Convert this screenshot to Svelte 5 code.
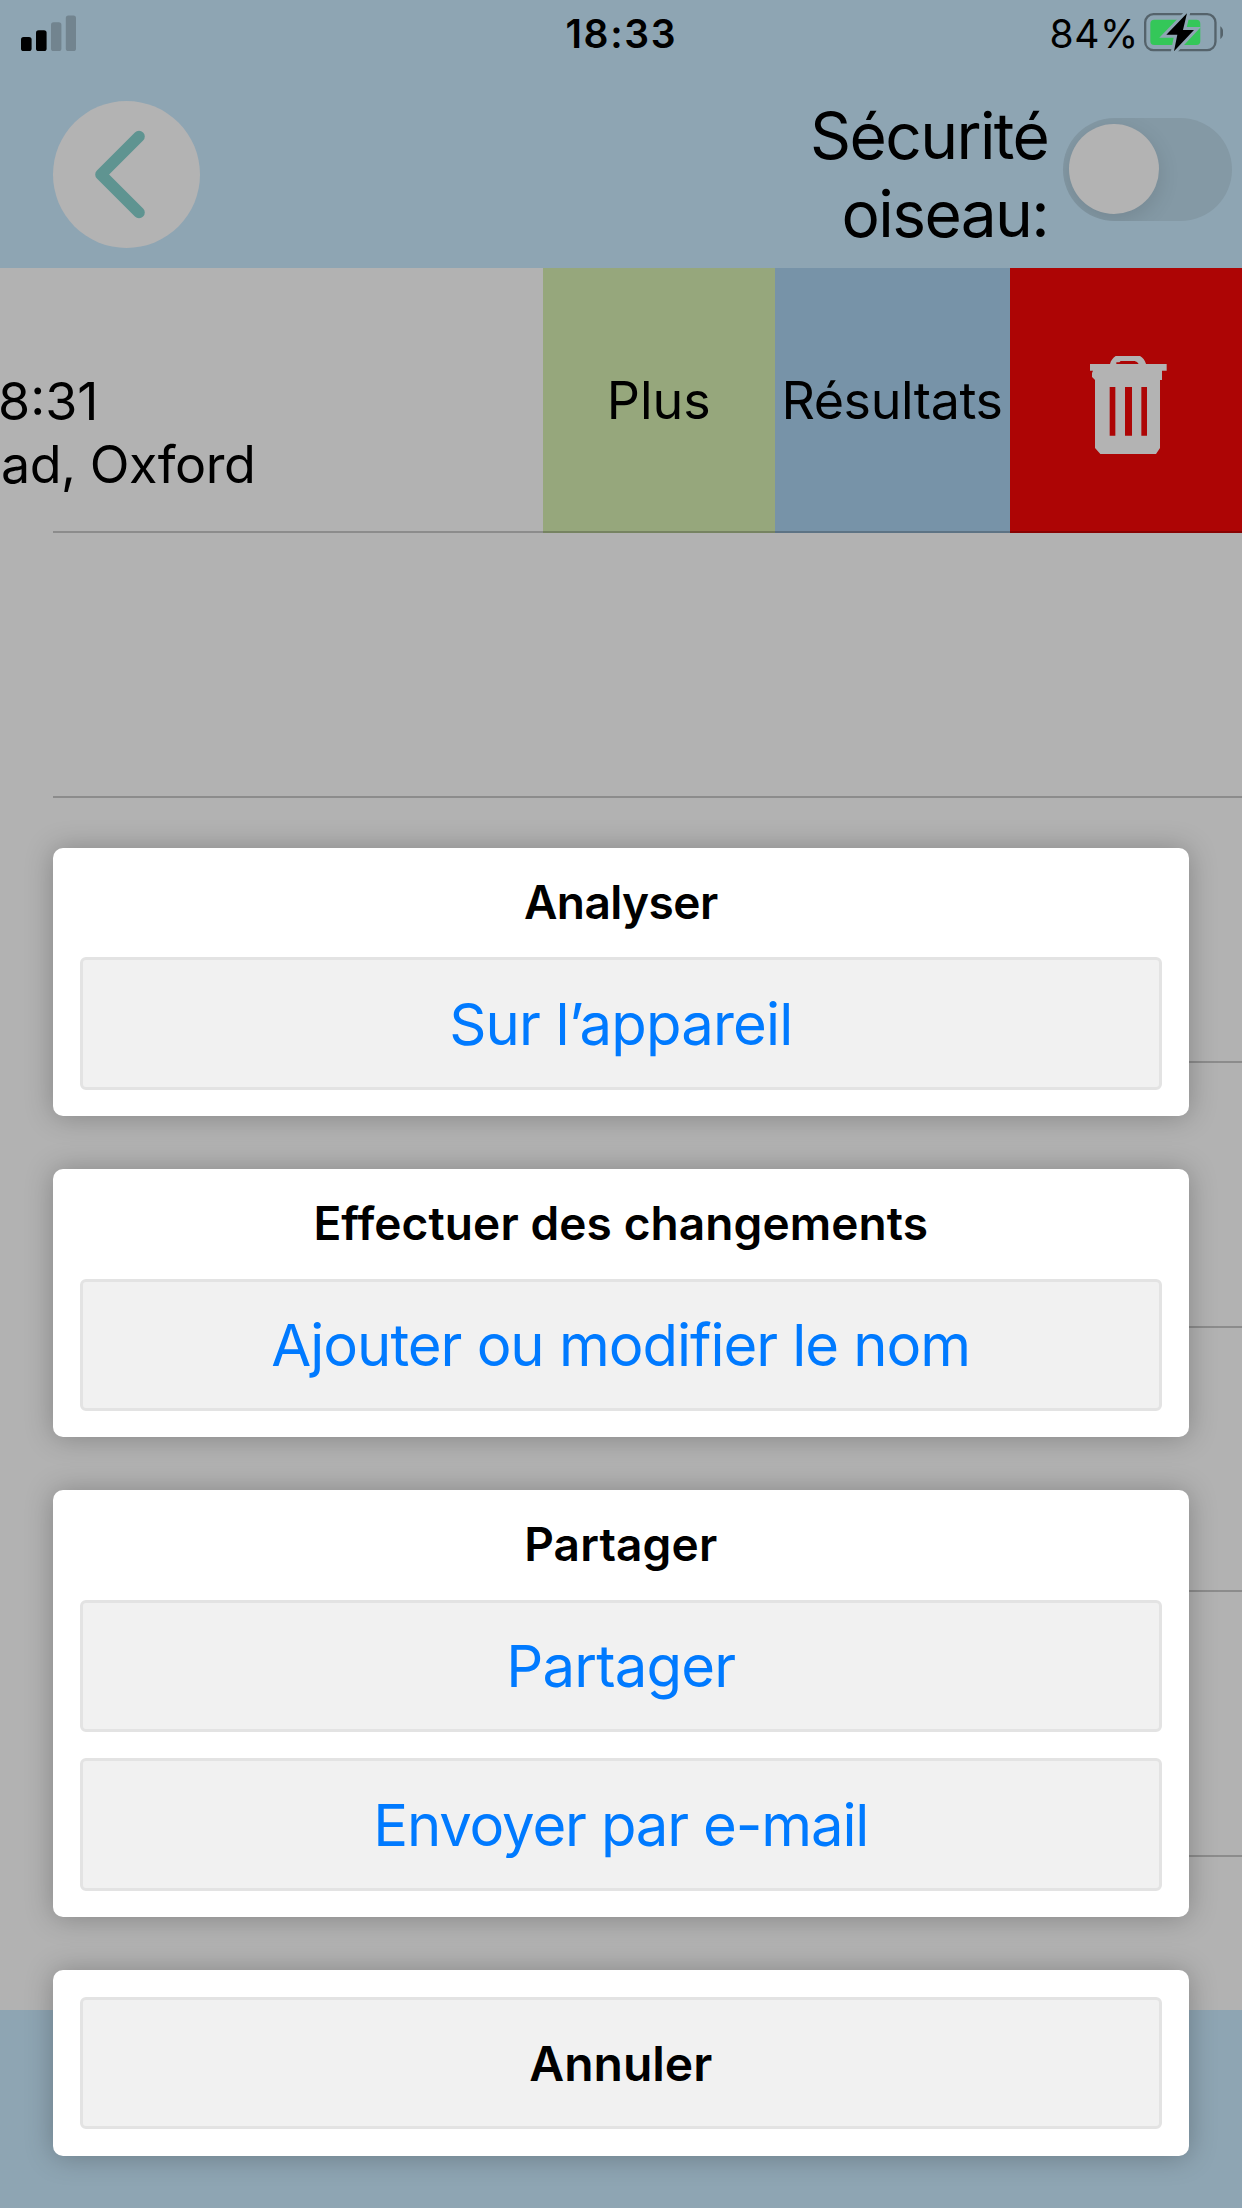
<script lang="ts">
  interface Label {
    text: string;
    tracking: number;
  }

  interface Group {
    title: Label;
    actions: Label[];
  }

  const groups: Group[] = [
    {
      title: { text: 'Analyser', tracking: -0.57 },
      actions: [{ text: 'Sur l’appareil', tracking: -0.85 }],
    },
    {
      title: { text: 'Effectuer des changements', tracking: 0.1 },
      actions: [{ text: 'Ajouter ou modifier le nom', tracking: -1.03 }],
    },
    {
      title: { text: 'Partager', tracking: 0.15 },
      actions: [
        { text: 'Partager', tracking: -0.8 },
        { text: 'Envoyer par e-mail', tracking: -1.15 },
      ],
    },
  ];

  const emptyRows = [1, 2, 3, 4, 5];

  let birdSafety = $state(false);
  let sheetOpen = $state(true);
</script>

<div class="screen">
  <div class="status-bar">
    <svg class="signal" width="55" height="36" viewBox="0 0 55 36">
      <rect x="0" y="22" width="10.6" height="14" rx="2.6" />
      <rect x="15" y="15.2" width="10.6" height="20.8" rx="2.6" />
      <rect class="off" x="30" y="7.2" width="10.4" height="28.8" rx="2.6" />
      <rect class="off" x="44.8" y="0.5" width="10.2" height="35.5" rx="2.6" />
    </svg>
    <span class="time">18:33</span>
    <div class="power">
      <span class="percent">84%</span>
      <svg width="79.3" height="38.4" viewBox="1092 39 238 115">
        <rect class="shell" x="1095.5" y="42.5" width="211" height="108" rx="25" />
        <path class="nub" d="M1321 79c12 7 12 31 0 38z" />
        <rect class="charge" x="1111" y="59" width="150" height="76" rx="12" />
        <path class="bolt halo" d="M1221 40 1159 104h33l-10 50 60-64h-33z" />
        <path class="bolt" d="M1221 40 1159 104h33l-10 50 60-64h-33z" />
      </svg>
    </div>
  </div>

  <header>
    <button class="back" aria-label="Retour">
      <svg width="147" height="147" viewBox="0 0 147 147">
        <path d="M86 35.5 48 73.5l38 38" />
      </svg>
    </button>
    <div class="safety">
      <span class="safety-label">Sécurité<br />oiseau:</span>
      <button
        class="switch"
        class:on={birdSafety}
        role="switch"
        aria-checked={birdSafety}
        aria-label="Sécurité oiseau"
        onclick={() => (birdSafety = !birdSafety)}
      >
        <span class="knob"></span>
      </button>
    </div>
  </header>

  <main>
    <div class="row swiped">
      <div class="recording">
        <span class="clock">8:31</span>
        <span class="place">ad, Oxford</span>
      </div>
      <button class="swipe more" onclick={() => (sheetOpen = true)}>Plus</button>
      <button class="swipe results">Résultats</button>
      <button class="swipe delete" aria-label="Supprimer">
        <svg width="76.7" height="98" viewBox="992 288 230 294">
          <path
            fill-rule="evenodd"
            d="M992 312h60c2-10 9-18 17-24h73c9 5 15 13 18 24h62v20h-14v28h-6v204l-12 18h-167l-16-18V360l-9-9v-12l3-7h-9zM1071 312h67l-5-6-7-3h-42l-4 4h-9zM1051 381v146h17V381zM1097 381v146h21V381zM1146 381v146h17V381z"
          />
        </svg>
      </button>
    </div>
    {#each emptyRows as row (row)}
      <div class="row"></div>
    {/each}
  </main>

  <footer></footer>

  {#if sheetOpen}
    <div class="sheet">
      {#each groups as group}
        <section class="card">
          <h2 style="letter-spacing:{group.title.tracking}px">{group.title.text}</h2>
          {#each group.actions as action}
            <button class="action" style="letter-spacing:{action.tracking}px">{action.text}</button>
          {/each}
        </section>
      {/each}
      <section class="card dismiss">
        <button class="action cancel" onclick={() => (sheetOpen = false)}>Annuler</button>
      </section>
    </div>
  {/if}
</div>

<style>
  :global(body) {
    margin: 0;
  }

  .screen {
    position: relative;
    display: flex;
    flex-direction: column;
    width: 1242px;
    height: 2208px;
    overflow: hidden;
    background: #b2b2b2;
    color: #000;
    font-family: Inter, 'Liberation Sans', sans-serif;
  }

  button {
    margin: 0;
    padding: 0;
    border: none;
    font: inherit;
    color: inherit;
    cursor: pointer;
  }

  svg {
    display: block;
  }

  .status-bar {
    display: grid;
    grid-template-columns: 1fr auto 1fr;
    align-items: center;
    box-sizing: border-box;
    height: 66px;
    padding: 0 18.7px 0 21.3px;
    background: #8ea5b3;
    font-size: 39px;
  }

  .signal .off {
    fill: #72848f;
  }

  .time {
    font-weight: 600;
    letter-spacing: 1.6px;
    padding: 1px 2px 0 0;
  }

  .power {
    display: flex;
    align-items: center;
    justify-content: flex-end;
    gap: 5px;
    margin-top: -1px;
  }

  .percent {
    letter-spacing: 0.6px;
    padding-top: 2px;
  }

  .shell {
    fill: none;
    stroke: #55636b;
    stroke-width: 7;
  }

  .nub {
    fill: #55636b;
  }

  .charge {
    fill: #34c759;
  }

  .bolt {
    fill: #000;
  }

  .bolt.halo {
    stroke: #8ea5b3;
    stroke-width: 18;
  }

  header {
    display: flex;
    align-items: center;
    justify-content: space-between;
    box-sizing: border-box;
    height: 202px;
    padding: 15px 10.3px 0 53.3px;
    background: #8ea5b3;
  }

  .back {
    width: 147px;
    height: 147px;
    border-radius: 50%;
    background: #b3b3b3;
  }

  .back path {
    fill: none;
    stroke: #5f9491;
    stroke-width: 11.6;
    stroke-linecap: round;
    stroke-linejoin: round;
  }

  .safety {
    display: flex;
    align-items: center;
    gap: 14.5px;
  }

  .safety-label {
    font-size: 64px;
    line-height: 78px;
    letter-spacing: -1.6px;
    text-align: right;
  }

  .switch {
    display: flex;
    align-items: center;
    box-sizing: border-box;
    width: 169px;
    height: 103px;
    margin-bottom: 11px;
    padding: 0 6.5px;
    border-radius: 52px;
    background: #8499a5;
    overflow: hidden;
  }

  .switch.on {
    justify-content: flex-end;
    background: #24893d;
  }

  .knob {
    width: 90px;
    height: 90px;
    border-radius: 50%;
    background: #b3b3b3;
    box-shadow: 0 6px 22px rgba(0, 0, 0, 0.12);
  }

  .row {
    position: relative;
    flex-shrink: 0;
    height: 264.9px;
  }

  .row::after {
    content: '';
    position: absolute;
    left: 53px;
    right: 0;
    bottom: 0;
    height: 2px;
    background: rgba(0, 0, 0, 0.21);
  }

  .swiped {
    display: grid;
    grid-template-columns: 543px 231.5px 235px 232.5px;
    font-size: 52px;
  }

  .recording {
    display: flex;
    flex-direction: column;
    padding-top: 102px;
    line-height: 63px;
  }

  .clock {
    margin-left: -2px;
  }

  .place {
    margin-left: 1px;
    letter-spacing: -0.5px;
  }

  .swipe {
    display: flex;
    align-items: center;
    justify-content: center;
  }

  .more {
    background: #96a77c;
  }

  .results {
    background: #7793a8;
    letter-spacing: -0.44px;
  }

  .delete {
    background: #ad0505;
  }

  .delete svg {
    margin: 10px 0 0 6px;
    fill: #b3b3b3;
  }

  footer {
    height: 198.5px;
    margin-top: auto;
    background: #8ea5b3;
  }

  .sheet {
    position: absolute;
    left: 53px;
    right: 53.5px;
    bottom: 52.4px;
    display: flex;
    flex-direction: column;
    gap: 53px;
  }

  .card {
    display: flex;
    flex-direction: column;
    gap: 26.5px;
    padding: 0 26.8px 26.5px;
    border-radius: 10px;
    background: #fff;
    box-shadow: 0 1px 28px rgba(0, 0, 0, 0.26);
  }

  .dismiss {
    padding-top: 26.8px;
  }

  h2 {
    margin: 0 0 -26.5px;
    font-size: 46px;
    font-weight: 600;
    line-height: 109.5px;
    text-align: center;
  }

  .action {
    box-sizing: border-box;
    height: 132.2px;
    padding-top: 1px;
    border: 3px solid #e3e3e3;
    border-radius: 6px;
    background: #f1f1f1;
    color: #007aff;
    font-size: 58px;
  }

  .cancel {
    color: #000;
    font-size: 48px;
    font-weight: 600;
  }
</style>
